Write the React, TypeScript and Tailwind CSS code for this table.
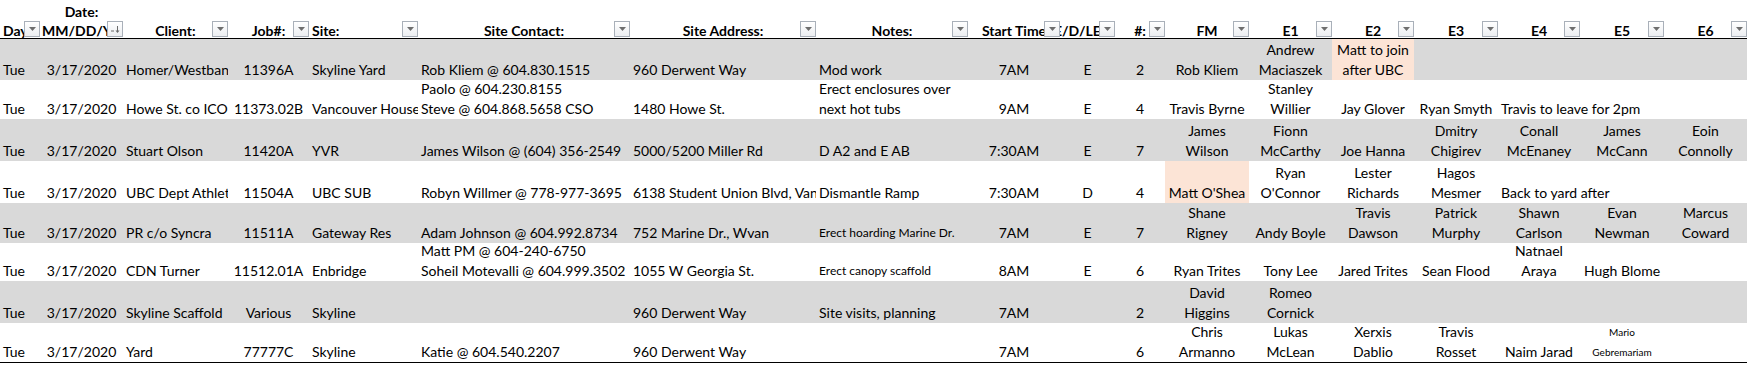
import React from "react";

type Cell =
  | string
  | {
      t: string;
      peach?: boolean;
      size?: "sm" | "xs";
      left?: boolean;
      spill?: boolean;
    };

const gridCols =
  "grid grid-cols-[40px_83px_105px_81px_109px_212px_186px_152px_92px_55px_50px_84px_83px_82px_84px_82px_84px_83px]";

// default alignment for each column
const align = ["l", "c", "l", "c", "l", "l", "l", "l", "c", "c", "c", "c", "c", "c", "c", "c", "c", "c"];

const headers: { t: string; a: string; sort?: boolean }[] = [
  { t: "Day", a: "l" },
  { t: "Date:\nMM/DD/YY", a: "c", sort: true },
  { t: "Client:", a: "c" },
  { t: "Job#:", a: "c" },
  { t: "Site:", a: "l" },
  { t: "Site Contact:", a: "c" },
  { t: "Site Address:", a: "c" },
  { t: "Notes:", a: "c" },
  { t: "Start Time", a: "c" },
  { t: "E/D/LEAD", a: "c" },
  { t: "#:", a: "c" },
  { t: "FM", a: "c" },
  { t: "E1", a: "c" },
  { t: "E2", a: "c" },
  { t: "E3", a: "c" },
  { t: "E4", a: "c" },
  { t: "E5", a: "c" },
  { t: "E6", a: "c" },
];

const rows: { h: string; gray: boolean; cells: Cell[] }[] = [
  {
    h: "h-[41px]",
    gray: true,
    cells: [
      "Tue", "3/17/2020", "Homer/Westbank", "11396A", "Skyline Yard",
      "Rob Kliem @ 604.830.1515", "960 Derwent Way", "Mod work", "7AM", "E", "2",
      "Rob Kliem", "Andrew\nMaciaszek", { t: "Matt to join\nafter UBC", peach: true }, "", "", "", "",
    ],
  },
  {
    h: "h-[39px]",
    gray: false,
    cells: [
      "Tue", "3/17/2020", "Howe St. co ICON", "11373.02B", "Vancouver House",
      "Paolo @ 604.230.8155\nSteve @ 604.868.5658 CSO", "1480 Howe St.", "Erect enclosures over\nnext hot tubs",
      "9AM", "E", "4", "Travis Byrne", "Stanley\nWillier", "Jay Glover", "Ryan Smyth",
      { t: "Travis to leave for 2pm", left: true, spill: true }, "", "",
    ],
  },
  {
    h: "h-[42px]",
    gray: true,
    cells: [
      "Tue", "3/17/2020", "Stuart Olson", "11420A", "YVR",
      "James Wilson @ (604) 356-2549", "5000/5200 Miller Rd", "D A2 and E AB", "7:30AM", "E", "7",
      "James\nWilson", "Fionn\nMcCarthy", "Joe Hanna", "Dmitry\nChigirev", "Conall\nMcEnaney", "James\nMcCann", "Eoin\nConnolly",
    ],
  },
  {
    h: "h-[42px]",
    gray: false,
    cells: [
      "Tue", "3/17/2020", "UBC Dept Athletics", "11504A", "UBC SUB",
      "Robyn Willmer @ 778-977-3695", "6138 Student Union Blvd, Vancouver", "Dismantle Ramp", "7:30AM", "D", "4",
      { t: "Matt O'Shea", peach: true }, "Ryan\nO'Connor", "Lester\nRichards", "Hagos\nMesmer",
      { t: "Back to yard after", left: true, spill: true }, "", "",
    ],
  },
  {
    h: "h-[40px]",
    gray: true,
    cells: [
      "Tue", "3/17/2020", "PR c/o Syncra", "11511A", "Gateway Res",
      "Adam Johnson @ 604.992.8734", "752 Marine Dr., Wvan", { t: "Erect hoarding Marine Dr.", size: "sm" },
      "7AM", "E", "7", "Shane\nRigney", "Andy Boyle", "Travis\nDawson", "Patrick\nMurphy", "Shawn\nCarlson", "Evan\nNewman", "Marcus\nCoward",
    ],
  },
  {
    h: "h-[38px]",
    gray: false,
    cells: [
      "Tue", "3/17/2020", "CDN Turner", "11512.01A", "Enbridge",
      "Matt PM @ 604-240-6750\nSoheil Motevalli @  604.999.3502", "1055 W Georgia St.", { t: "Erect canopy scaffold", size: "sm" },
      "8AM", "E", "6", "Ryan Trites", "Tony Lee", "Jared Trites", "Sean Flood", "Natnael\nAraya", "Hugh Blome", "",
    ],
  },
  {
    h: "h-[42px]",
    gray: true,
    cells: [
      "Tue", "3/17/2020", "Skyline Scaffold", "Various", "Skyline",
      "", "960 Derwent Way", "Site visits, planning", "7AM", "", "2",
      "David\nHiggins", "Romeo\nCornick", "", "", "", "", "",
    ],
  },
  {
    h: "h-[40px]",
    gray: false,
    cells: [
      "Tue", "3/17/2020", "Yard", "77777C", "Skyline",
      "Katie @ 604.540.2207", "960 Derwent Way", "", "7AM", "", "6",
      "Chris\nArmanno", "Lukas\nMcLean", "Xerxis\nDablio", "Travis\nRosset", "Naim Jarad",
      { t: "Mario\nGebremariam", size: "xs" }, "",
    ],
  },
];

function FilterButton({ sort = false }: { sort?: boolean }) {
  return (
    <div className="absolute right-0 bottom-[1px] w-[16px] h-[16px] border border-[#a9b0b9] bg-gradient-to-b from-white to-[#eceef1] flex items-center justify-center">
      {sort ? (
        <svg width="11" height="10" viewBox="0 0 11 10">
          <line x1="1" y1="7" x2="4" y2="7" stroke="#6b6b6b" strokeWidth="1" />
          <line x1="7.5" y1="2" x2="7.5" y2="8" stroke="#6b6b6b" strokeWidth="1" />
          <polygon points="5.5,6.5 9.5,6.5 7.5,9" fill="#6b6b6b" />
        </svg>
      ) : (
        <svg width="7" height="4" viewBox="0 0 7 4">
          <polygon points="0,0 7,0 3.5,4" fill="#6e6e6e" />
        </svg>
      )}
    </div>
  );
}

export default function App() {
  return (
    <div className="w-[1747px] h-[366px] bg-white text-black overflow-hidden font-[Lato,sans-serif] text-[14px]">
      {/* header */}
      <div className={`${gridCols} h-[39px] border-b border-black`}>
        {headers.map((h, i) => (
          <div
            key={i}
            className={`relative overflow-hidden flex flex-col justify-end font-bold leading-[19px] whitespace-nowrap ${
              h.a === "l" ? "items-start pl-[3px]" : "items-center"
            }`}
          >
            {h.t.split("\n").map((line, k) => (
              <div key={k} className="translate-y-[2px]">
                {line}
              </div>
            ))}
            <FilterButton sort={h.sort} />
          </div>
        ))}
      </div>

      {/* rows */}
      {rows.map((row, r) => (
        <div
          key={r}
          className={`${gridCols} ${row.h} ${row.gray ? "bg-[#d9d9d9]" : "bg-white"} ${
            r === rows.length - 1 ? "border-b border-black" : ""
          }`}
        >
          {row.cells.map((c, i) => {
            const cell = typeof c === "string" ? { t: c } : c;
            const left = cell.left || align[i] === "l";
            return (
              <div
                key={i}
                className={`flex flex-col justify-end whitespace-nowrap leading-[20px] ${
                  cell.spill ? "overflow-visible z-10" : "overflow-hidden"
                } ${left ? "items-start pl-[3px]" : "items-center"} ${
                  cell.peach ? "bg-[#fce4d6]" : ""
                } ${cell.size === "sm" ? "text-[12px]" : cell.size === "xs" ? "text-[10px] leading-[18px]" : ""}`}
              >
                {cell.t.split("\n").map((line, k) => (
                  <div key={k}>{line || "\u00a0"}</div>
                ))}
              </div>
            );
          })}
        </div>
      ))}
    </div>
  );
}
